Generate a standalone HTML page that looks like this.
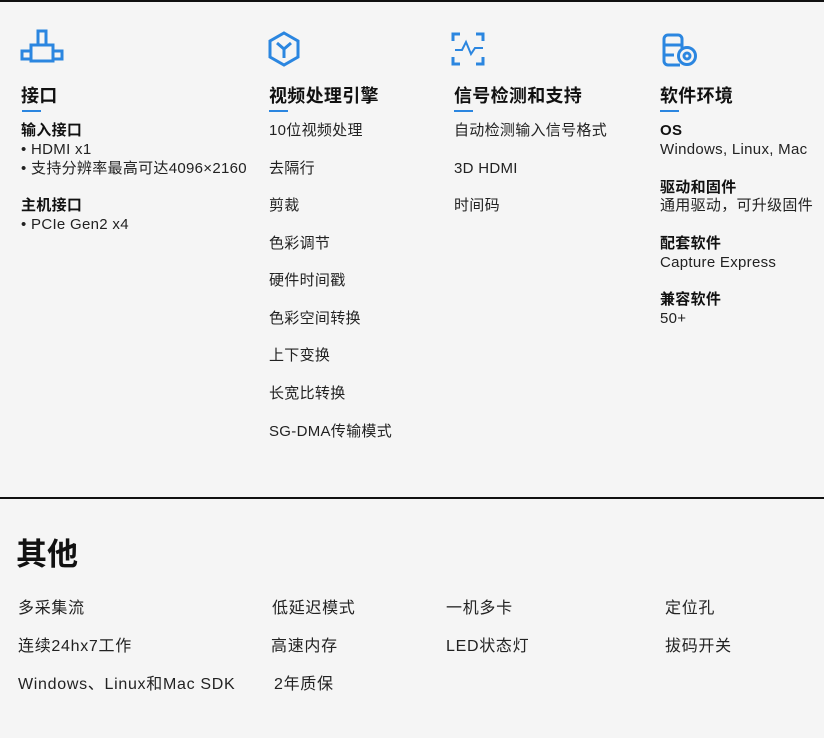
<!DOCTYPE html><html><head><meta charset="utf-8"><style>
body{margin:0;width:824px;height:738px;background:#f5f5f5;position:relative;overflow:hidden;font-family:"Liberation Sans","Noto Sans CJK SC",sans-serif;color:#222}
.a{position:absolute;white-space:nowrap;font-size:15px;line-height:18px;letter-spacing:.3px;margin-top:2px}
.t{font-size:18px;font-weight:bold;line-height:22px;color:#111;letter-spacing:.3px;margin-top:1px}
.b{font-weight:bold;color:#111}
.c{font-size:16px;letter-spacing:.7px}
.u{position:absolute;height:2px;width:19px;background:#2b86e0}
.l{position:absolute;left:0;width:824px;height:2px;background:#111}
svg{position:absolute}
</style></head><body>
<div class="l" style="top:0"></div>
<div class="l" style="top:497px"></div>
<svg style="left:0;top:0" width="824" height="80" fill="none" stroke="#2b86e0" stroke-width="3">
<rect x="38" y="31" width="8" height="14"/><rect x="31" y="45" width="22" height="16"/><rect x="22" y="51" width="9" height="8"/><rect x="53" y="51" width="9" height="8"/>
<path d="M284 33l14 8v16l-14 8-14-8V41z"/><path d="M277 43l7 6 7-6M284 49v9"/>
<path d="M453 41v-7h7M476 34h7v7M453 57v7h7M476 64h7v-7"/><path d="M455 50h7l4-8 5 12 4-6h8" stroke-width="2"/>
<path d="M682 48V39a4 4 0 0 0-4-4h-10a4 4 0 0 0-4 4v22a4 4 0 0 0 4 4h12"/><path d="M664 45h18M664 55h10"/><circle cx="687" cy="56" r="8.5"/><circle cx="687" cy="56" r="3"/>
</svg>

<div class="a t" style="left:21px;top:84px">接口</div><div class="u" style="left:22px;top:110px"></div>
<div class="a b" style="left:21px;top:120px">输入接口</div>
<div class="a" style="left:21px;top:139px">• HDMI x1</div>
<div class="a" style="left:21px;top:158px">• 支持分辨率最高可达4096×2160</div>
<div class="a b" style="left:21px;top:195px">主机接口</div>
<div class="a" style="left:21px;top:214px">• PCIe Gen2 x4</div>

<div class="a t" style="left:269px;top:84px">视频处理引擎</div><div class="u" style="left:269px;top:110px"></div>
<div class="a" style="left:269px;top:120px">10位视频处理</div>
<div class="a" style="left:269px;top:158px">去隔行</div>
<div class="a" style="left:269px;top:195px">剪裁</div>
<div class="a" style="left:269px;top:233px">色彩调节</div>
<div class="a" style="left:269px;top:270px">硬件时间戳</div>
<div class="a" style="left:269px;top:308px">色彩空间转换</div>
<div class="a" style="left:269px;top:345px">上下变换</div>
<div class="a" style="left:269px;top:383px">长宽比转换</div>
<div class="a" style="left:269px;top:421px">SG-DMA传输模式</div>

<div class="a t" style="left:454px;top:84px">信号检测和支持</div><div class="u" style="left:454px;top:110px"></div>
<div class="a" style="left:454px;top:120px">自动检测输入信号格式</div>
<div class="a" style="left:454px;top:158px">3D HDMI</div>
<div class="a" style="left:454px;top:195px">时间码</div>

<div class="a t" style="left:660px;top:84px">软件环境</div><div class="u" style="left:660px;top:110px"></div>
<div class="a b" style="left:660px;top:120px">OS</div>
<div class="a" style="left:660px;top:139px">Windows, Linux, Mac</div>
<div class="a b" style="left:660px;top:177px">驱动和固件</div>
<div class="a" style="left:660px;top:195px">通用驱动，可升级固件</div>
<div class="a b" style="left:660px;top:233px">配套软件</div>
<div class="a" style="left:660px;top:252px">Capture Express</div>
<div class="a b" style="left:660px;top:289px">兼容软件</div>
<div class="a" style="left:660px;top:308px">50+</div>

<div class="a" style="left:16px;top:534px;font-size:31px;line-height:38px;font-weight:bold;color:#111;letter-spacing:0">其他</div>
<div class="a c" style="left:18px;top:598px">多采集流</div>
<div class="a c" style="left:18px;top:636px">连续24hx7工作</div>
<div class="a c" style="left:18px;top:674px">Windows、Linux和Mac SDK</div>
<div class="a c" style="left:272px;top:598px">低延迟模式</div>
<div class="a c" style="left:271px;top:636px">高速内存</div>
<div class="a c" style="left:274px;top:674px">2年质保</div>
<div class="a c" style="left:446px;top:598px">一机多卡</div>
<div class="a c" style="left:446px;top:636px">LED状态灯</div>
<div class="a c" style="left:665px;top:598px">定位孔</div>
<div class="a c" style="left:665px;top:636px">拔码开关</div>
</body></html>
